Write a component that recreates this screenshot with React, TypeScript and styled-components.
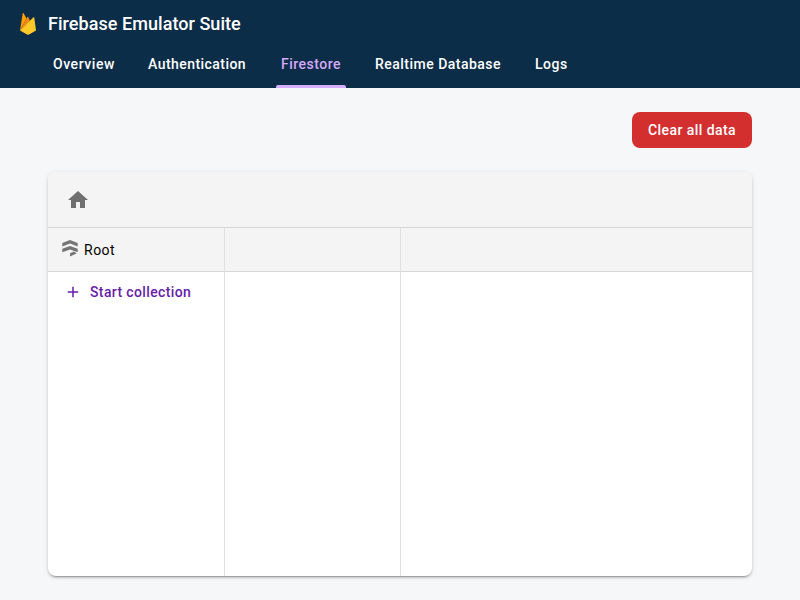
import React from "react";
import styled, { createGlobalStyle } from "styled-components";

const GlobalStyle = createGlobalStyle`
  *, *::before, *::after { box-sizing: border-box; }
  body { margin: 0; background: #f5f7f9; font-family: Roboto, sans-serif; -webkit-font-smoothing: antialiased; }
`;

const Page = styled.div`
  height: 600px;
  display: flex;
  flex-direction: column;
`;

const TopBar = styled.header`
  height: 88px;
  background: #0c2d48;
  color: #fff;
  display: flex;
  flex-direction: column;
`;

const Brand = styled.div`
  height: 48px;
  display: flex;
  align-items: center;
  padding-left: 20px;
  gap: 12px;
  svg { display: block; }
`;

const Title = styled.h1`
  margin: 0;
  font-size: 18px;
  line-height: 24px;
  font-weight: 500;
  letter-spacing: 0.05px;
`;

const Tabs = styled.nav`
  height: 40px;
  display: flex;
  padding-left: 36px;
`;

const Tab = styled.a<{ $active?: boolean; $width: number; $spacing: number }>`
  display: flex;
  flex-direction: column;
  flex: 0 0 ${(p) => p.$width}px;
  padding: 6px 0 0 17px;
  font-size: 14px;
  line-height: 20px;
  font-weight: 500;
  letter-spacing: ${(p) => p.$spacing}px;
  white-space: nowrap;
  color: ${(p) => (p.$active ? "#d6a8f8" : "#fff")};
`;

const Indicator = styled.span`
  height: 3px;
  margin: auto 12px 0 -5px;
  border-radius: 2px 2px 0 0;
  background: #d7aefb;
`;

const Main = styled.main`
  flex: 1;
  padding: 24px 48px;
  display: flex;
  flex-direction: column;
  gap: 24px;
`;

const Actions = styled.div`
  display: flex;
  justify-content: flex-end;
`;

const DangerButton = styled.button`
  height: 36px;
  width: 120px;
  padding: 0;
  border: 0;
  border-radius: 8px;
  background: #d32f2f;
  color: #fff;
  font: 500 14px/36px Roboto, sans-serif;
  letter-spacing: 0.43px;
  white-space: nowrap;
`;

const Card = styled.section`
  height: 404px;
  display: flex;
  flex-direction: column;
  border-radius: 8px;
  overflow: hidden;
  background: #fff;
  box-shadow: 0 3px 1px -2px rgba(0,0,0,.2), 0 2px 2px rgba(0,0,0,.14), 0 1px 5px rgba(0,0,0,.12);
`;

const Breadcrumbs = styled.div`
  height: 56px;
  display: flex;
  align-items: center;
  padding-left: 18px;
  background: #f4f4f4;
  border-bottom: 1px solid #d6d6d6;
`;

const Panels = styled.div`
  flex: 1;
  display: grid;
  grid-template-columns: 177px 176px 1fr;
`;

const Panel = styled.div`
  border-right: 1px solid #e0e0e0;
  &:last-child { border-right: 0; }
`;

const PanelHeader = styled.div`
  height: 44px;
  display: flex;
  align-items: center;
  gap: 6px;
  padding-left: 14px;
  background: #f4f4f4;
  border-bottom: 1px solid #d6d6d6;
  font-size: 14px;
  letter-spacing: 0.5px;
  color: #000;
`;

const StartButton = styled.button`
  height: 40px;
  display: flex;
  align-items: center;
  gap: 8px;
  padding: 0 0 0 16px;
  border: 0;
  background: none;
  color: #681da8;
  font: 500 14px/20px Roboto, sans-serif;
  letter-spacing: 0.37px;
  white-space: nowrap;
`;

const FirebaseLogo = () => (
  <svg width="16" height="22" viewBox="0 0 16 22">
    <path d="M0 17.5 2.7.5c.1-.5.7-.6.9-.2l2.9 5.3Z" fill="#ffa000" />
    <path d="M0 17.5 7.4 4q.4-.6.8 0L10 7.7Z" fill="#f58a0c" />
    <path d="m0 17.5 13.2-13c.4-.4 1-.2 1.1.3L16 17.5l-7 4.1c-.6.3-1.3.3-1.9 0Z" fill="#ffca28" />
  </svg>
);

const HomeIcon = () => (
  <svg width="24" height="24" viewBox="0 0 24 24" fill="#6f6f6f">
    <path d="M10 20v-6h4v6h5v-8h3L12 3 2 12h3v8z" />
  </svg>
);

const FirestoreGlyph = styled.svg`
  margin-top: -3px;
`;

const FirestoreIcon = () => (
  <FirestoreGlyph width="16" height="17" viewBox="0 0 16 17" fill="#757575">
    <path d="M8 0 .3 2.900v3.500L8 3.500l7.700 2.900V2.900z" />
    <path d="M8 5.900.3 8.800v3.500L8 9.400l7.700 2.900V8.800z" />
    <path d="M8 13.200 12 11.600 14.600 13.400 8 16.400z" />
  </FirestoreGlyph>
);

const PlusIcon = () => (
  <svg width="18" height="18" viewBox="0 0 24 24" fill="#681da8">
    <path d="M19 13h-6v6h-2v-6H5v-2h6V5h2v6h6z" />
  </svg>
);

const tabs = [
  { label: "Overview", width: 95, spacing: 0.55 },
  { label: "Authentication", width: 133, spacing: 0.45 },
  { label: "Firestore", width: 94, spacing: 0.5 },
  { label: "Realtime Database", width: 160, spacing: 0.48 },
  { label: "Logs", width: 67, spacing: 0.5 },
];

export default function App() {
  return (
    <Page>
      <GlobalStyle />
      <TopBar>
        <Brand>
          <FirebaseLogo />
          <Title>Firebase Emulator Suite</Title>
        </Brand>
        <Tabs>
          {tabs.map(({ label, width, spacing }) => (
            <Tab key={label} $active={label === "Firestore"} $width={width} $spacing={spacing}>
              {label}
              {label === "Firestore" && <Indicator />}
            </Tab>
          ))}
        </Tabs>
      </TopBar>
      <Main>
        <Actions>
          <DangerButton>Clear all data</DangerButton>
        </Actions>
        <Card>
          <Breadcrumbs>
            <HomeIcon />
          </Breadcrumbs>
          <Panels>
            <Panel>
              <PanelHeader>
                <FirestoreIcon />
                Root
              </PanelHeader>
              <StartButton>
                <PlusIcon />
                Start collection
              </StartButton>
            </Panel>
            <Panel>
              <PanelHeader />
            </Panel>
            <Panel>
              <PanelHeader />
            </Panel>
          </Panels>
        </Card>
      </Main>
    </Page>
  );
}
